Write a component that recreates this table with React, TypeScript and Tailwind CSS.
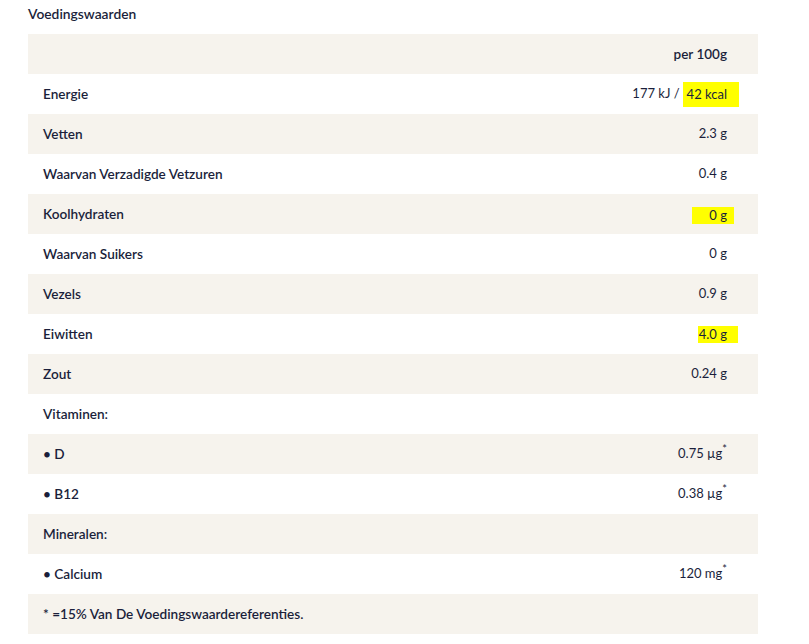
import React from 'react'

type Row = { label: string; value?: React.ReactNode }

const hl = (t: string, cls: string) => (
  <span className={`inline-block leading-none bg-[#ffff00] ${cls}`}>{t}</span>
)

const rows: Row[] = [
  { label: '', value: <span className="font-semibold text-[13.5px]">per 100g</span> },
  { label: 'Energie', value: <>177 kJ /{hl('42 kcal', 'ml-[3px] pl-[4px] pr-[12px] -mr-[12px] py-[6px] -my-[6px]')}</> },
  { label: 'Vetten', value: '2.3 g' },
  { label: 'Waarvan Verzadigde Vetzuren', value: '0.4 g' },
  { label: 'Koolhydraten', value: hl('0 g', 'pl-[17px] pr-[7px] -mr-[7px] py-[2px] -my-[2px] translate-y-[1px]') },
  { label: 'Waarvan Suikers', value: '0 g' },
  { label: 'Vezels', value: '0.9 g' },
  { label: 'Eiwitten', value: hl('4.0 g', 'pl-[1px] pr-[11px] -mr-[11px] py-[2px] -my-[2px]') },
  { label: 'Zout', value: '0.24 g' },
  { label: 'Vitaminen:' },
  { label: '• D', value: <>0.75 µg<sup className="text-[11px]">*</sup></> },
  { label: '• B12', value: <>0.38 µg<sup className="text-[11px]">*</sup></> },
  { label: 'Mineralen:' },
  { label: '• Calcium', value: <>120 mg<sup className="text-[11px]">*</sup></> },
  { label: '* =15% Van De Voedingswaardereferenties.' },
]

export default function App() {
  return (
    <div className="w-[809px] h-[644px] bg-white text-[#1b1f3b] font-['Lato','Open_Sans',sans-serif] text-[13px]">
      <div className="pl-[28px] pt-[4px] h-[34px] font-semibold text-[13.8px]">Voedingswaarden</div>
      <div className="ml-[28px] w-[730px]">
        {rows.map((r, i) => (
          <div
            key={i}
            className={`h-[40px] flex items-center justify-between pl-[15px] pr-[31px] ${i % 2 === 0 ? 'bg-[#f6f3ed]' : 'bg-white'}`}
          >
            <span className="font-semibold text-[13.6px]">{r.label}</span>
            <span className="flex items-center">{r.value}</span>
          </div>
        ))}
      </div>
    </div>
  )
}
